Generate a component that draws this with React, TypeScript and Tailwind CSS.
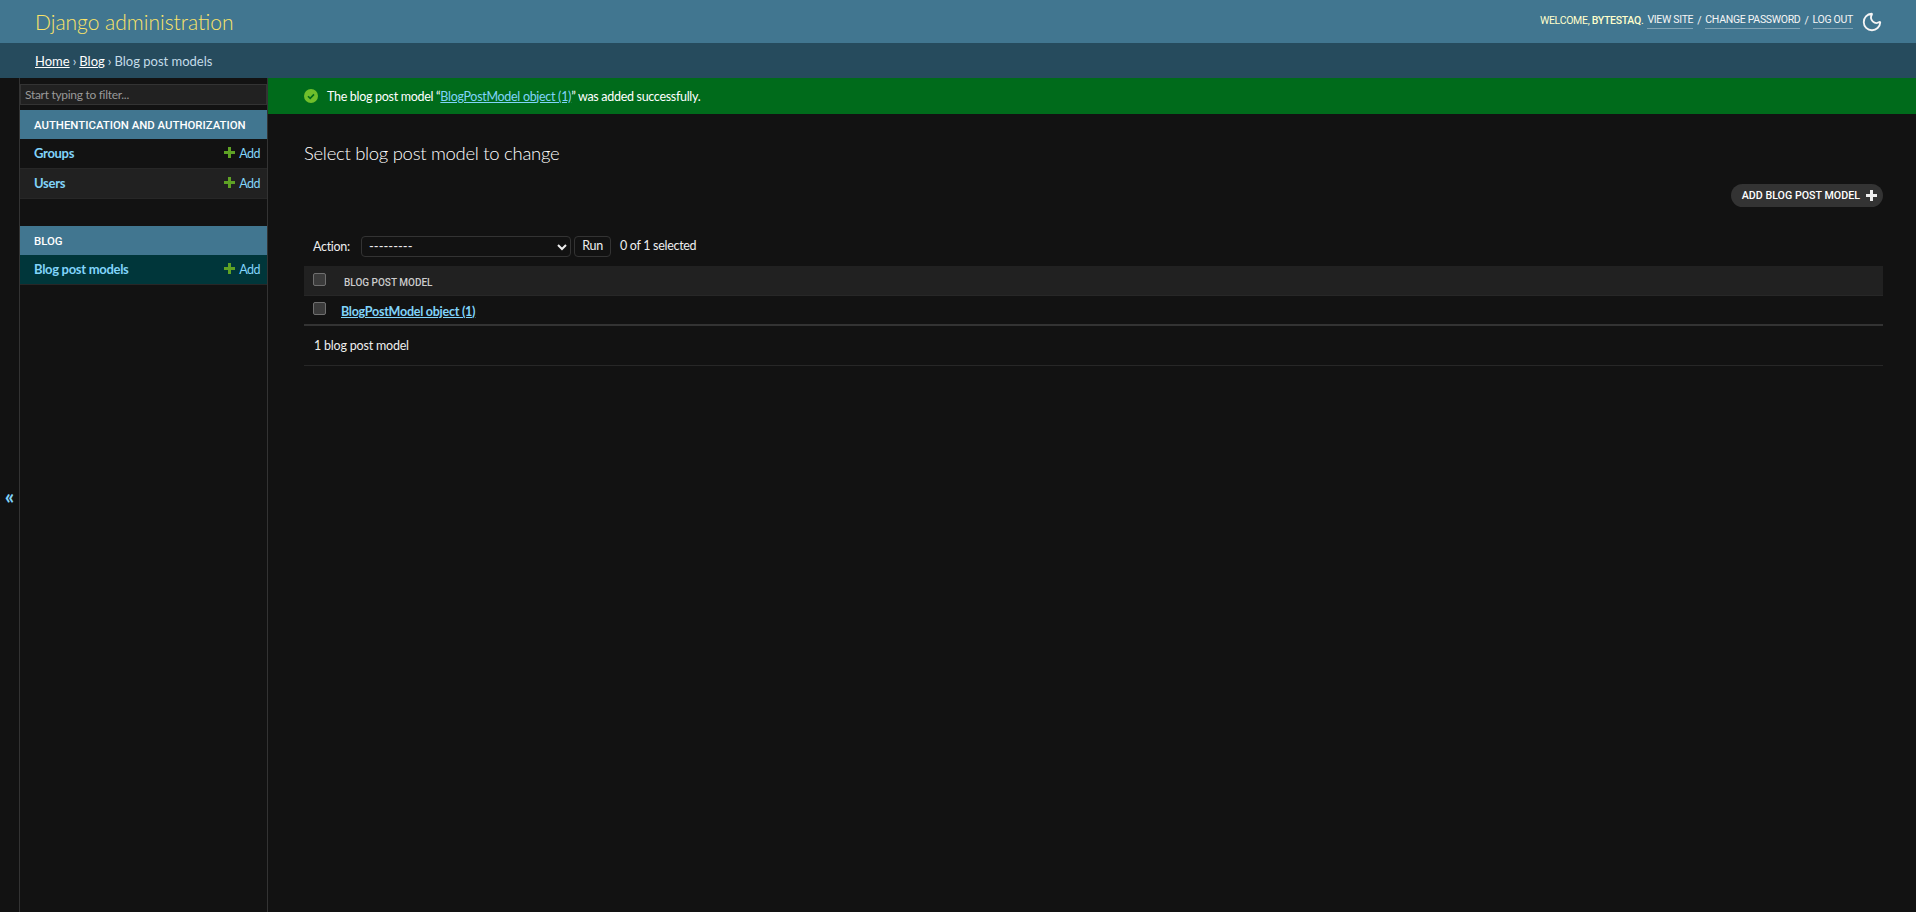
import { Moon } from 'lucide-react';

const font = "font-['Lato','Noto_Sans',sans-serif]";
const caps = "font-['Roboto','Noto_Sans',sans-serif]";

function AddLink() {
  return (
    <a className="flex items-center gap-[4px] text-[12.5px] leading-none tracking-[-0.5px] text-[#81d4fa]">
      <svg width="11" height="11" viewBox="0 0 11 11" className="-mt-[3px]">
        <path d="M4 0h3v4h4v3H7v4H4V7H0V4h4z" fill="#5fa225" />
      </svg>
      Add
    </a>
  );
}

function ModelRow({ name, shaded, current }: { name: string; shaded?: boolean; current?: boolean }) {
  const bg = current ? 'bg-[#00363a]' : shaded ? 'bg-[#212121]' : 'bg-[#121212]';
  return (
    <div className={`flex h-[30px] items-center justify-between border-b border-[#272727] pl-[14px] pr-[7px] pt-[1px] ${bg}`}>
      <a className="text-[13px] font-bold tracking-[-0.3px] text-[#81d4fa]">{name}</a>
      <AddLink />
    </div>
  );
}

function Caption({ children }: { children: string }) {
  return (
    <div className={`flex h-[29px] items-center whitespace-nowrap bg-[#417690] pl-[14px] pt-[2px] text-[11.4px] font-medium text-white ${caps}`}>
      {children}
    </div>
  );
}

function Checkbox() {
  return <span className="block h-[13px] w-[13px] rounded-[2px] border border-[#6f6f6f] bg-[#3b3b3b]" />;
}

export default function App() {
  return (
    <div className={`flex min-h-[912px] flex-col bg-[#121212] text-[#eeeeee] ${font}`}>
      {/* Header */}
      <header className="flex h-[43px] items-center justify-between bg-[#417690] pl-[35px] pr-[33px]">
        <h1 className="text-[21px] font-light text-[#fbe468]">Django administration</h1>
        <div className={`flex items-center text-[10.5px] uppercase tracking-[-0.3px] text-[#ffffcc] ${caps}`}>
          <span className="-mt-[2px]">
            Welcome, <strong className="font-medium">bytestaq</strong>.
          </span>
          <a className="-mt-[2px] ml-[4px] border-b border-[#ffffff55] text-[#f5f5f5]">View site</a>
          <span className="-mt-[2px] mx-[4px] text-[#f5f5f5]">/</span>
          <a className="-mt-[2px] border-b border-[#ffffff55] text-[#f5f5f5]">Change password</a>
          <span className="-mt-[2px] mx-[4px] text-[#f5f5f5]">/</span>
          <a className="-mt-[2px] border-b border-[#ffffff55] text-[#f5f5f5]">Log out</a>
          <Moon className="ml-[8px] h-[22px] w-[22px] text-[#f5f5f5]" strokeWidth={2} />
        </div>
      </header>

      {/* Breadcrumbs */}
      <div className="flex h-[35px] items-center bg-[#264b5d] pl-[35px] pt-[3px] text-[13px] text-[#c4dce8]">
        <a className="text-white underline">Home</a>
        <span className="mx-[3px]">›</span>
        <a className="text-white underline">Blog</a>
        <span className="mx-[3px]">›</span>
        <span>Blog post models</span>
      </div>

      <div className="flex flex-1">
        {/* Collapse toggle */}
        <div className="flex w-[20px] shrink-0 items-center justify-center border-r border-[#333333] pt-[1px] text-[21px] font-bold leading-none text-[#81d4fa]">
          «
        </div>

        {/* Sidebar */}
        <aside className="w-[248px] shrink-0 border-r border-[#333333]">
          <div className="pt-[6px]">
            <input
              placeholder="Start typing to filter..."
              className="block h-[21px] w-full border border-[#333333] bg-[#212121] px-[4px] text-[12px] tracking-[-0.3px] text-[#eeeeee] outline-none placeholder:text-[#999999]"
            />
          </div>
          <div className="mt-[5px]">
            <Caption>AUTHENTICATION AND AUTHORIZATION</Caption>
            <ModelRow name="Groups" />
            <ModelRow name="Users" shaded />
          </div>
          <div className="mt-[27px]">
            <Caption>BLOG</Caption>
            <ModelRow name="Blog post models" current />
          </div>
        </aside>

        {/* Main */}
        <main className="min-w-0 flex-1">
          <div className="flex h-[36px] items-center bg-[#006b1b] pl-[36px] text-[12.5px] tracking-[-0.3px] text-white">
            <svg width="14" height="14" viewBox="0 0 14 14" className="mr-[9px] shrink-0">
              <circle cx="7" cy="7" r="7" fill="#70bf2b" />
              <path d="M4 7.2l2.2 2.2L10 5.4" fill="none" stroke="#006b1b" strokeWidth="1.6" />
            </svg>
            <span className="pt-[2px]">
              The blog post model “<a className="text-[#81d4fa] underline">BlogPostModel object (1)</a>” was added successfully.
            </span>
          </div>

          <div className="px-[36px] pr-[33px]">
            <h2 className="mt-[25px] text-[18.5px] font-light leading-[28px] tracking-[-0.3px] text-white">Select blog post model to change</h2>

            <div className="mt-[17px] flex justify-end">
              <a className={`flex h-[23px] items-center gap-[6px] rounded-full bg-[#333333] pl-[11px] pr-[6px] text-[10.7px] font-medium uppercase text-white ${caps}`}>
                <span className="pt-[1px]">Add blog post model</span>
                <svg width="11" height="11" viewBox="0 0 11 11">
                  <path d="M4 0h3v4h4v3H7v4H4V7H0V4h4z" fill="#eeeeee" />
                </svg>
              </a>
            </div>

            <div className="mt-[29px] flex h-[21px] items-center pl-[9px] text-[12.5px] tracking-[-0.3px]">
              <span className="w-[48px] pt-[2px]">Action:</span>
              <div className="relative h-[21px] w-[210px] rounded-[4px] border border-[#333333] pl-[7px] text-[13px] leading-[19px] tracking-normal">
                ---------
                <svg width="10" height="7" viewBox="0 0 10 7" className="absolute right-[3px] top-[7px]">
                  <path d="M1 1l4 4 4-4" fill="none" stroke="#eeeeee" strokeWidth="2" />
                </svg>
              </div>
              <button className="ml-[3px] h-[21px] w-[37px] rounded-[4px] border border-[#333333] text-[#eeeeee]">Run</button>
              <span className="ml-[9px] -mt-[1px]">0 of 1 selected</span>
            </div>

            <div className={`mt-[9px] flex h-[30px] items-center border-b border-[#272727] bg-[#212121] pl-[9px] text-[10px] font-medium uppercase text-[#cccccc] ${caps}`}>
              <span className="-mt-[3px]"><Checkbox /></span>
              <span className="ml-[18px] mt-[4px]">Blog post model</span>
            </div>
            <div className="flex h-[30px] items-center border-b-2 border-[#333333] pl-[9px] text-[12.5px] tracking-[-0.25px]">
              <span className="-mt-[3px]"><Checkbox /></span>
              <a className="ml-[15px] mt-[5px] font-bold text-[#81d4fa] underline">BlogPostModel object (1)</a>
            </div>
            <div className="flex h-[40px] items-center border-b border-[#272727] pl-[10px] pt-[2px] text-[12.5px] tracking-[-0.2px] text-[#eeeeee]">
              1 blog post model
            </div>
          </div>
        </main>
      </div>
    </div>
  );
}
